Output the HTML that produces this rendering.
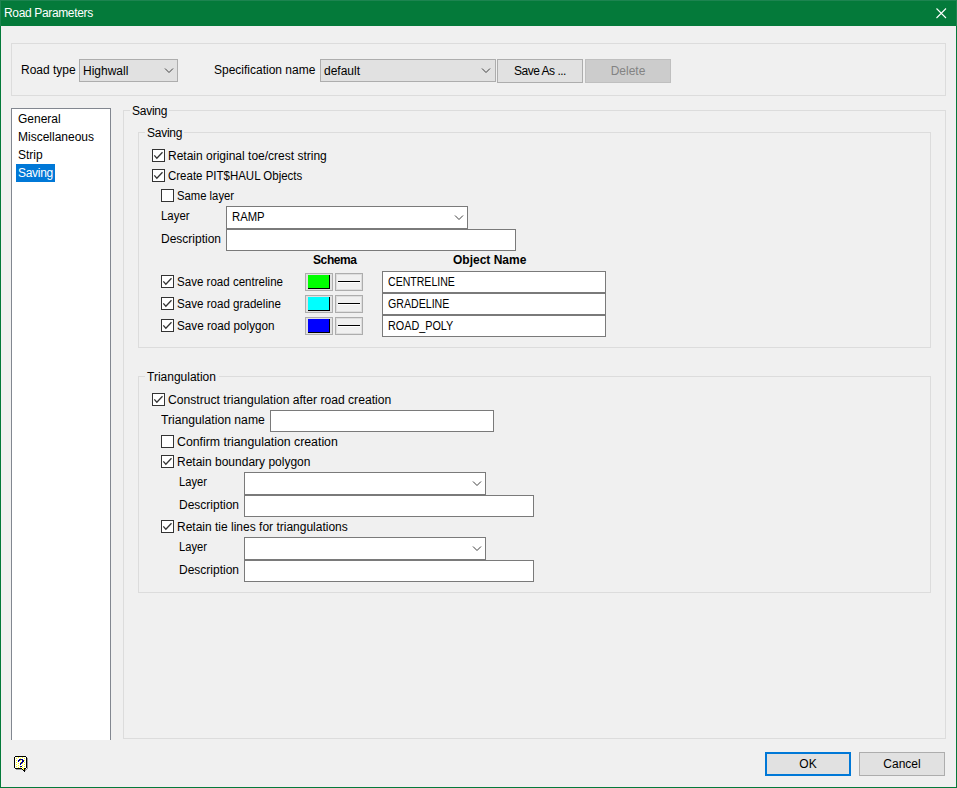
<!DOCTYPE html>
<html><head><meta charset="utf-8">
<style>
*{box-sizing:border-box;margin:0;padding:0}
html,body{width:957px;height:788px;overflow:hidden;background:#f0f0f0}
body{position:relative;font-family:"Liberation Sans",sans-serif;font-size:12px;color:#000}
.a{position:absolute}
.t{position:absolute;line-height:14px;white-space:nowrap}
.grp{position:absolute;border:1px solid #dcdcdc}
.cmb{position:absolute;background:#e1e1e1;border:1px solid #adadad}
.btn{position:absolute;background:#e1e1e1;border:1px solid #adadad;text-align:center;line-height:14px;font-family:"Liberation Sans",sans-serif;font-size:12px}
.edit{position:absolute;background:#fff;border:1px solid #7a7a7a}
.cb{position:absolute;width:13px;height:13px;border:1px solid #333;background:#fff}
.cb svg{position:absolute;left:-1px;top:-1px}
.chev{position:absolute}
.lbl{background:#f0f0f0;padding:0 2px 0 2px;letter-spacing:-0.25px}
</style></head><body>
<div class="a" style="left:0;top:0;width:957px;height:26px;background:#047a3a"></div>
<div class="a" style="left:0;top:0;width:957px;height:1px;background:#1d8450"></div>
<div class="a" style="left:0;top:0;width:1px;height:26px;background:#1d8450"></div>
<div class="a" style="left:956px;top:0;width:1px;height:26px;background:#1d8450"></div>
<div class="a" style="left:0;top:26px;width:1px;height:762px;background:#047a3a"></div>
<div class="a" style="left:956px;top:26px;width:1px;height:762px;background:#047a3a"></div>
<div class="a" style="left:0;top:787px;width:957px;height:1px;background:#047a3a"></div>
<div class="t" style="left:4px;top:6px;color:#fff;letter-spacing:-0.35px">Road Parameters</div>
<svg class="a" style="left:935px;top:7px" width="13" height="13" viewBox="0 0 13 13"><path d="M1.5 1.5L11 11M11 1.5L1.5 11" stroke="#fff" stroke-width="1.1"/></svg>
<div class="grp" style="left:11px;top:43px;width:935px;height:53px"></div>
<div class="t" style="left:21px;top:63px;">Road type</div>
<div class="cmb" style="left:79px;top:59px;width:99px;height:23px"></div>
<div class="t" style="left:83px;top:64px;">Highwall</div>
<svg class="chev" style="left:164px;top:67px" width="11" height="8" viewBox="0 0 11 8"><path d="M1 1.5L5 5.5L9 1.5" fill="none" stroke="#404040" stroke-width="1"/></svg>
<div class="t" style="left:214px;top:63px;">Specification name</div>
<div class="cmb" style="left:320px;top:59px;width:176px;height:23px"></div>
<div class="t" style="left:324px;top:64px;">default</div>
<svg class="chev" style="left:481px;top:67px" width="11" height="8" viewBox="0 0 11 8"><path d="M1 1.5L5 5.5L9 1.5" fill="none" stroke="#404040" stroke-width="1"/></svg>
<div class="btn" style="left:497px;top:59px;width:86px;height:24px;padding-top:4px;letter-spacing:-0.5px">Save As ...</div>
<div class="btn" style="left:585px;top:59px;width:86px;height:24px;padding-top:4px;background:#cccccc;border-color:#bfbfbf;color:#838383">Delete</div>
<div class="a" style="left:11px;top:108px;width:100px;height:632px;background:#fff;border:1px solid #828790;border-bottom:none"></div>
<div class="t" style="left:18px;top:112px;">General</div>
<div class="t" style="left:18px;top:130px;">Miscellaneous</div>
<div class="t" style="left:18px;top:148px;">Strip</div>
<div class="a" style="left:16px;top:164px;width:39px;height:18px;background:#0078d7"></div>
<div class="t" style="left:18px;top:166px;color:#fff;letter-spacing:-0.3px">Saving</div>
<div class="grp" style="left:123px;top:110px;width:823px;height:629px"></div>
<div class="t lbl" style="left:130px;top:104px">Saving</div>
<div class="grp" style="left:138px;top:132px;width:793px;height:216px"></div>
<div class="t lbl" style="left:145px;top:126px">Saving</div>
<div class="cb" style="left:152px;top:149px"><svg width="13" height="13" viewBox="0 0 13 13"><path d="M2.3 6.4L4.85 9.2L10.5 3.3" fill="none" stroke="#333" stroke-width="1.3"/></svg></div><div class="t" style="left:168px;top:149px;">Retain original toe/crest string</div>
<div class="cb" style="left:152px;top:169px"><svg width="13" height="13" viewBox="0 0 13 13"><path d="M2.3 6.4L4.85 9.2L10.5 3.3" fill="none" stroke="#333" stroke-width="1.3"/></svg></div><div class="t" style="left:168px;top:169px;;transform:scaleX(0.957);transform-origin:0 0">Create PIT$HAUL Objects</div>
<div class="cb" style="left:161px;top:189px"></div><div class="t" style="left:177px;top:189px;;transform:scaleX(0.94);transform-origin:0 0">Same layer</div>
<div class="t" style="left:161px;top:209px;;transform:scaleX(0.95);transform-origin:0 0">Layer</div>
<div class="edit" style="left:226px;top:206px;width:242px;height:23px"></div><svg class="chev" style="left:454px;top:214px" width="11" height="8" viewBox="0 0 11 8"><path d="M1 1.5L5 5.5L9 1.5" fill="none" stroke="#404040" stroke-width="1"/></svg>
<div class="t" style="left:232px;top:210px;transform:scaleX(0.94);transform-origin:0 0">RAMP</div>
<div class="t" style="left:161px;top:232px;">Description</div>
<div class="edit" style="left:226px;top:229px;width:290px;height:22px"></div>
<div class="t" style="left:313px;top:253px;font-weight:bold;letter-spacing:-0.4px">Schema</div>
<div class="t" style="left:453px;top:253px;font-weight:bold">Object Name</div>
<div class="cb" style="left:161px;top:275px"><svg width="13" height="13" viewBox="0 0 13 13"><path d="M2.3 6.4L4.85 9.2L10.5 3.3" fill="none" stroke="#333" stroke-width="1.3"/></svg></div><div class="t" style="left:177px;top:275px;;transform:scaleX(0.963);transform-origin:0 0">Save road centreline</div>
<div class="a" style="left:305px;top:273px;width:28px;height:18px;border:1px solid #adadad;background:#e1e1e1"></div>
<div class="a" style="left:308px;top:275px;width:22px;height:14px;background:#00ff00;border-right:1px solid #000;border-bottom:1px solid #000"></div>
<div class="a" style="left:335px;top:273px;width:28px;height:18px;border:1px solid #adadad;background:#f0f0f0;box-shadow:inset 0 0 0 1px #dedede"></div>
<div class="a" style="left:338px;top:281px;width:22px;height:1px;background:#000"></div><div class="a" style="left:338px;top:282px;width:22px;height:1px;background:#fff"></div>
<div class="edit" style="left:382px;top:271px;width:224px;height:22px"></div>
<div class="t" style="left:388px;top:275px;transform:scaleX(0.88);transform-origin:0 0">CENTRELINE</div>
<div class="cb" style="left:161px;top:297px"><svg width="13" height="13" viewBox="0 0 13 13"><path d="M2.3 6.4L4.85 9.2L10.5 3.3" fill="none" stroke="#333" stroke-width="1.3"/></svg></div><div class="t" style="left:177px;top:297px;;transform:scaleX(0.967);transform-origin:0 0">Save road gradeline</div>
<div class="a" style="left:305px;top:295px;width:28px;height:18px;border:1px solid #adadad;background:#e1e1e1"></div>
<div class="a" style="left:308px;top:297px;width:22px;height:14px;background:#00ffff;border-right:1px solid #000;border-bottom:1px solid #000"></div>
<div class="a" style="left:335px;top:295px;width:28px;height:18px;border:1px solid #adadad;background:#f0f0f0;box-shadow:inset 0 0 0 1px #dedede"></div>
<div class="a" style="left:338px;top:303px;width:22px;height:1px;background:#000"></div><div class="a" style="left:338px;top:304px;width:22px;height:1px;background:#fff"></div>
<div class="edit" style="left:382px;top:293px;width:224px;height:22px"></div>
<div class="t" style="left:388px;top:297px;transform:scaleX(0.885);transform-origin:0 0">GRADELINE</div>
<div class="cb" style="left:161px;top:319px"><svg width="13" height="13" viewBox="0 0 13 13"><path d="M2.3 6.4L4.85 9.2L10.5 3.3" fill="none" stroke="#333" stroke-width="1.3"/></svg></div><div class="t" style="left:177px;top:319px;;transform:scaleX(0.975);transform-origin:0 0">Save road polygon</div>
<div class="a" style="left:305px;top:317px;width:28px;height:18px;border:1px solid #adadad;background:#e1e1e1"></div>
<div class="a" style="left:308px;top:319px;width:22px;height:14px;background:#0000ff;border-right:1px solid #000;border-bottom:1px solid #000"></div>
<div class="a" style="left:335px;top:317px;width:28px;height:18px;border:1px solid #adadad;background:#f0f0f0;box-shadow:inset 0 0 0 1px #dedede"></div>
<div class="a" style="left:338px;top:325px;width:22px;height:1px;background:#000"></div><div class="a" style="left:338px;top:326px;width:22px;height:1px;background:#fff"></div>
<div class="edit" style="left:382px;top:315px;width:224px;height:22px"></div>
<div class="t" style="left:388px;top:319px;transform:scaleX(0.9);transform-origin:0 0">ROAD_POLY</div>
<div class="grp" style="left:138px;top:376px;width:793px;height:217px"></div>
<div class="t lbl" style="left:145px;top:370px;letter-spacing:0;padding-right:3px">Triangulation</div>
<div class="cb" style="left:152px;top:393px"><svg width="13" height="13" viewBox="0 0 13 13"><path d="M2.3 6.4L4.85 9.2L10.5 3.3" fill="none" stroke="#333" stroke-width="1.3"/></svg></div><div class="t" style="left:168px;top:393px;;transform:scaleX(1.011);transform-origin:0 0">Construct triangulation after road creation</div>
<div class="t" style="left:161px;top:413px;;transform:scaleX(1.015);transform-origin:0 0">Triangulation name</div>
<div class="edit" style="left:270px;top:410px;width:224px;height:22px"></div>
<div class="cb" style="left:161px;top:435px"></div><div class="t" style="left:177px;top:435px;;transform:scaleX(1.026);transform-origin:0 0">Confirm triangulation creation</div>
<div class="cb" style="left:161px;top:455px"><svg width="13" height="13" viewBox="0 0 13 13"><path d="M2.3 6.4L4.85 9.2L10.5 3.3" fill="none" stroke="#333" stroke-width="1.3"/></svg></div><div class="t" style="left:177px;top:455px;">Retain boundary polygon</div>
<div class="t" style="left:179px;top:475px;;transform:scaleX(0.93);transform-origin:0 0">Layer</div>
<div class="edit" style="left:244px;top:472px;width:242px;height:23px"></div><svg class="chev" style="left:472px;top:480px" width="11" height="8" viewBox="0 0 11 8"><path d="M1 1.5L5 5.5L9 1.5" fill="none" stroke="#404040" stroke-width="1"/></svg>
<div class="t" style="left:179px;top:498px;">Description</div>
<div class="edit" style="left:244px;top:495px;width:290px;height:22px"></div>
<div class="cb" style="left:161px;top:520px"><svg width="13" height="13" viewBox="0 0 13 13"><path d="M2.3 6.4L4.85 9.2L10.5 3.3" fill="none" stroke="#333" stroke-width="1.3"/></svg></div><div class="t" style="left:177px;top:520px;">Retain tie lines for triangulations</div>
<div class="t" style="left:179px;top:540px;;transform:scaleX(0.93);transform-origin:0 0">Layer</div>
<div class="edit" style="left:244px;top:537px;width:242px;height:23px"></div><svg class="chev" style="left:472px;top:545px" width="11" height="8" viewBox="0 0 11 8"><path d="M1 1.5L5 5.5L9 1.5" fill="none" stroke="#404040" stroke-width="1"/></svg>
<div class="t" style="left:179px;top:563px;">Description</div>
<div class="edit" style="left:244px;top:560px;width:290px;height:22px"></div>
<div class="btn" style="left:765px;top:752px;width:86px;height:24px;border:2px solid #0078d7;padding-top:3px">OK</div>
<div class="btn" style="left:859px;top:752px;width:86px;height:24px;padding-top:4px">Cancel</div>
<svg class="a" style="left:13px;top:755px" width="16" height="18" viewBox="0 0 16 18" shape-rendering="crispEdges"><rect x="14" y="3" width="1" height="11" fill="#9a9a9a"/><rect x="3" y="14" width="6" height="1" fill="#9a9a9a"/><rect x="12" y="14" width="2" height="1" fill="#9a9a9a"/><rect x="12" y="15" width="1" height="1" fill="#9a9a9a"/><rect x="2" y="2" width="11" height="11" fill="#ffffff"/><rect x="5" y="2" width="1" height="1" fill="#ffff00"/><rect x="9" y="2" width="1" height="1" fill="#ffff00"/><rect x="3" y="3" width="1" height="1" fill="#ffff00"/><rect x="7" y="3" width="1" height="1" fill="#ffff00"/><rect x="11" y="3" width="1" height="1" fill="#ffff00"/><rect x="9" y="4" width="1" height="1" fill="#ffff00"/><rect x="3" y="5" width="1" height="1" fill="#ffff00"/><rect x="7" y="5" width="1" height="1" fill="#ffff00"/><rect x="11" y="5" width="1" height="1" fill="#ffff00"/><rect x="5" y="6" width="1" height="1" fill="#ffff00"/><rect x="9" y="6" width="1" height="1" fill="#ffff00"/><rect x="3" y="7" width="1" height="1" fill="#ffff00"/><rect x="7" y="7" width="1" height="1" fill="#ffff00"/><rect x="11" y="7" width="1" height="1" fill="#ffff00"/><rect x="5" y="8" width="1" height="1" fill="#ffff00"/><rect x="9" y="8" width="1" height="1" fill="#ffff00"/><rect x="3" y="9" width="1" height="1" fill="#ffff00"/><rect x="7" y="9" width="1" height="1" fill="#ffff00"/><rect x="11" y="9" width="1" height="1" fill="#ffff00"/><rect x="5" y="10" width="1" height="1" fill="#ffff00"/><rect x="9" y="10" width="1" height="1" fill="#ffff00"/><rect x="3" y="11" width="1" height="1" fill="#ffff00"/><rect x="7" y="11" width="1" height="1" fill="#ffff00"/><rect x="11" y="11" width="1" height="1" fill="#ffff00"/><rect x="5" y="12" width="1" height="1" fill="#ffff00"/><rect x="9" y="12" width="1" height="1" fill="#ffff00"/><rect x="7" y="12" width="1" height="1" fill="#ffff00"/><rect x="2" y="1" width="11" height="1" fill="#000"/><rect x="1" y="2" width="1" height="11" fill="#000"/><rect x="13" y="2" width="1" height="11" fill="#000"/><rect x="2" y="13" width="7" height="1" fill="#000"/><rect x="11" y="13" width="2" height="1" fill="#000"/><rect x="9" y="13" width="1" height="1" fill="#fff"/><rect x="10" y="13" width="1" height="1" fill="#ffff00"/><rect x="9" y="14" width="1" height="1" fill="#000"/><rect x="10" y="14" width="1" height="1" fill="#ffff00"/><rect x="11" y="14" width="1" height="1" fill="#000"/><rect x="10" y="15" width="2" height="1" fill="#000"/><rect x="11" y="16" width="1" height="1" fill="#000"/><rect x="6" y="4" width="4" height="1" fill="#000080"/><rect x="5" y="5" width="2" height="1" fill="#000080"/><rect x="9" y="5" width="2" height="1" fill="#000080"/><rect x="5" y="6" width="1" height="1" fill="#000080"/><rect x="9" y="6" width="2" height="1" fill="#000080"/><rect x="8" y="7" width="2" height="1" fill="#000080"/><rect x="7" y="8" width="2" height="1" fill="#000080"/><rect x="8" y="8" width="1" height="1" fill="#0000ff"/><rect x="7" y="9" width="1" height="1" fill="#000080"/><rect x="7" y="11" width="2" height="1" fill="#000080"/></svg>
</body></html>
